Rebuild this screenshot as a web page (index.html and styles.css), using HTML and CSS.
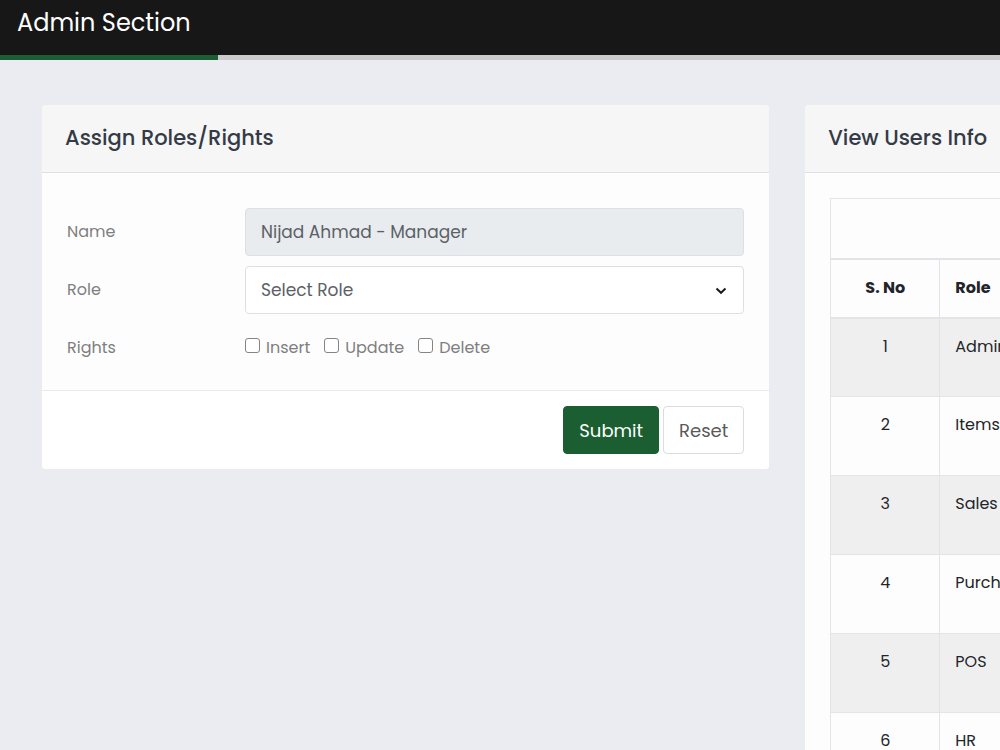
FILE: index.html
```html
<!DOCTYPE html>
<html lang="en">
<head>
<meta charset="utf-8">
<title>Admin Section</title>
<link rel="stylesheet" href="styles.css">
</head>
<body>
<header class="topbar"><h1 class="topbar-title">Admin Section</h1></header>
<div class="progress"><div class="progress-fill"></div></div>
<main class="panels">
  <form class="panel">
    <h2 class="panel-header">Assign Roles/Rights</h2>
    <div class="form-body">
      <label class="form-label" for="name">Name</label>
      <input class="control readonly" id="name" type="text" value="Nijad Ahmad - Manager" readonly>
      <label class="form-label" for="role">Role</label>
      <div class="select-wrap">
        <select class="control select" id="role"><option>Select Role</option></select>
        <svg class="chevron" width="12" height="8" viewBox="0 0 12 8" aria-hidden="true"><path d="M1.5 1.5 6 5.8 10.5 1.5" fill="none" stroke="#1c1c1c" stroke-width="2"/></svg>
      </div>
      <span class="form-label" id="rights">Rights</span>
      <div class="checks" role="group" aria-labelledby="rights">
        <label class="check"><input class="box" type="checkbox">Insert</label>
        <label class="check"><input class="box" type="checkbox">Update</label>
        <label class="check"><input class="box" type="checkbox">Delete</label>
      </div>
    </div>
    <div class="form-footer">
      <button class="btn btn-submit" type="submit">Submit</button>
      <button class="btn btn-reset" type="reset">Reset</button>
    </div>
  </form>
  <section class="panel">
    <h2 class="panel-header">View Users Info</h2>
    <div class="table-body">
      <table class="users">
        <thead>
          <tr><td class="toolbar" colspan="2"></td></tr>
          <tr><th class="number">S. No</th><th>Role</th></tr>
        </thead>
        <tbody>
          <tr><td class="number">1</td><td>Admin</td></tr>
          <tr><td class="number">2</td><td>Items</td></tr>
          <tr><td class="number">3</td><td>Sales</td></tr>
          <tr><td class="number">4</td><td>Purchase</td></tr>
          <tr><td class="number">5</td><td>POS</td></tr>
          <tr><td class="number">6</td><td>HR</td></tr>
        </tbody>
      </table>
    </div>
  </section>
</main>
</body>
</html>
```
FILE: styles.css
```css
* { box-sizing: border-box; }
body {
  margin: 0;
  height: 100vh;
  overflow: hidden;
  background: #ebecf1;
  color: #212529;
  font: 16px/24px Poppins, Inter, sans-serif;
}
.topbar { padding: 5px 17px 14px; background: #171717; }
.topbar-title { margin: 0; color: #fff; font-size: 24px; line-height: 36px; font-weight: 400; }
.progress { height: 5px; background: #cbcbcb; }
.progress-fill { width: 21.8%; height: 100%; background: #1b5e32; }
.panels { display: flex; align-items: flex-start; gap: 36px; padding: 45px 42px; }
.panel { flex: 0 0 79.4%; min-width: 0; border-radius: 4px; background: #fdfdfd; overflow: hidden; }
.panel-header {
  margin: 0;
  padding: 17px 23px 18px;
  border-bottom: 1px solid #dfe0e2;
  background: #f6f6f6;
  color: #343a46;
  font-size: 21px;
  line-height: 32px;
  font-weight: 500;
}
.form-body {
  display: grid;
  grid-template-columns: 178px minmax(0, 1fr);
  row-gap: 10px;
  align-items: center;
  padding: 35px 25px 18px;
}
.form-label, .check { color: #7f7f7f; }
.control {
  display: block;
  width: 100%;
  height: 48px;
  padding: 0 15px;
  border: 1px solid #dcdfe3;
  border-radius: 4px;
  background: #fff;
  color: #5c6166;
  font: inherit;
  font-size: 17px;
}
.readonly { background: #e8ecef; }
.select-wrap { position: relative; }
.select { appearance: none; }
.chevron { position: absolute; right: 17px; top: 21px; pointer-events: none; }
.checks { display: flex; align-items: center; gap: 14px; height: 48px; }
.check { display: flex; align-items: center; gap: 6px; }
.box {
  appearance: none;
  width: 15px;
  height: 15px;
  margin: 0 0 5px;
  border: 1px solid #858585;
  border-radius: 3px;
  background: #fff;
}
.box:checked { background: #1b5e32; }
.form-footer {
  display: flex;
  justify-content: flex-end;
  gap: 4px;
  padding: 15px 25px;
  border-top: 1px solid #e9eaec;
  background: #fff;
}
.btn { height: 48px; padding: 2px 15px 0; border: 1px solid #dcdcdc; border-radius: 4px; font: inherit; font-size: 18px; }
.btn-submit { border-color: #1b5e32; background: #1b5e32; color: #fff; }
.btn-reset { background: #fff; color: #5a5a5a; }
.table-body { padding: 25px; }
.users { width: 100%; border-collapse: collapse; }
.users th, .users td { border: 1px solid #e2e4e8; padding: 16px 15px; text-align: left; vertical-align: top; }
.users th { height: 59px; border-bottom-width: 2px; font-weight: 700; }
.users .toolbar { height: 60px; border-bottom-width: 2px; }
.users tbody td { height: 79px; }
.users tbody tr:nth-child(odd) { background: #efefef; }
.users .number { width: 109px; text-align: center; }
```
